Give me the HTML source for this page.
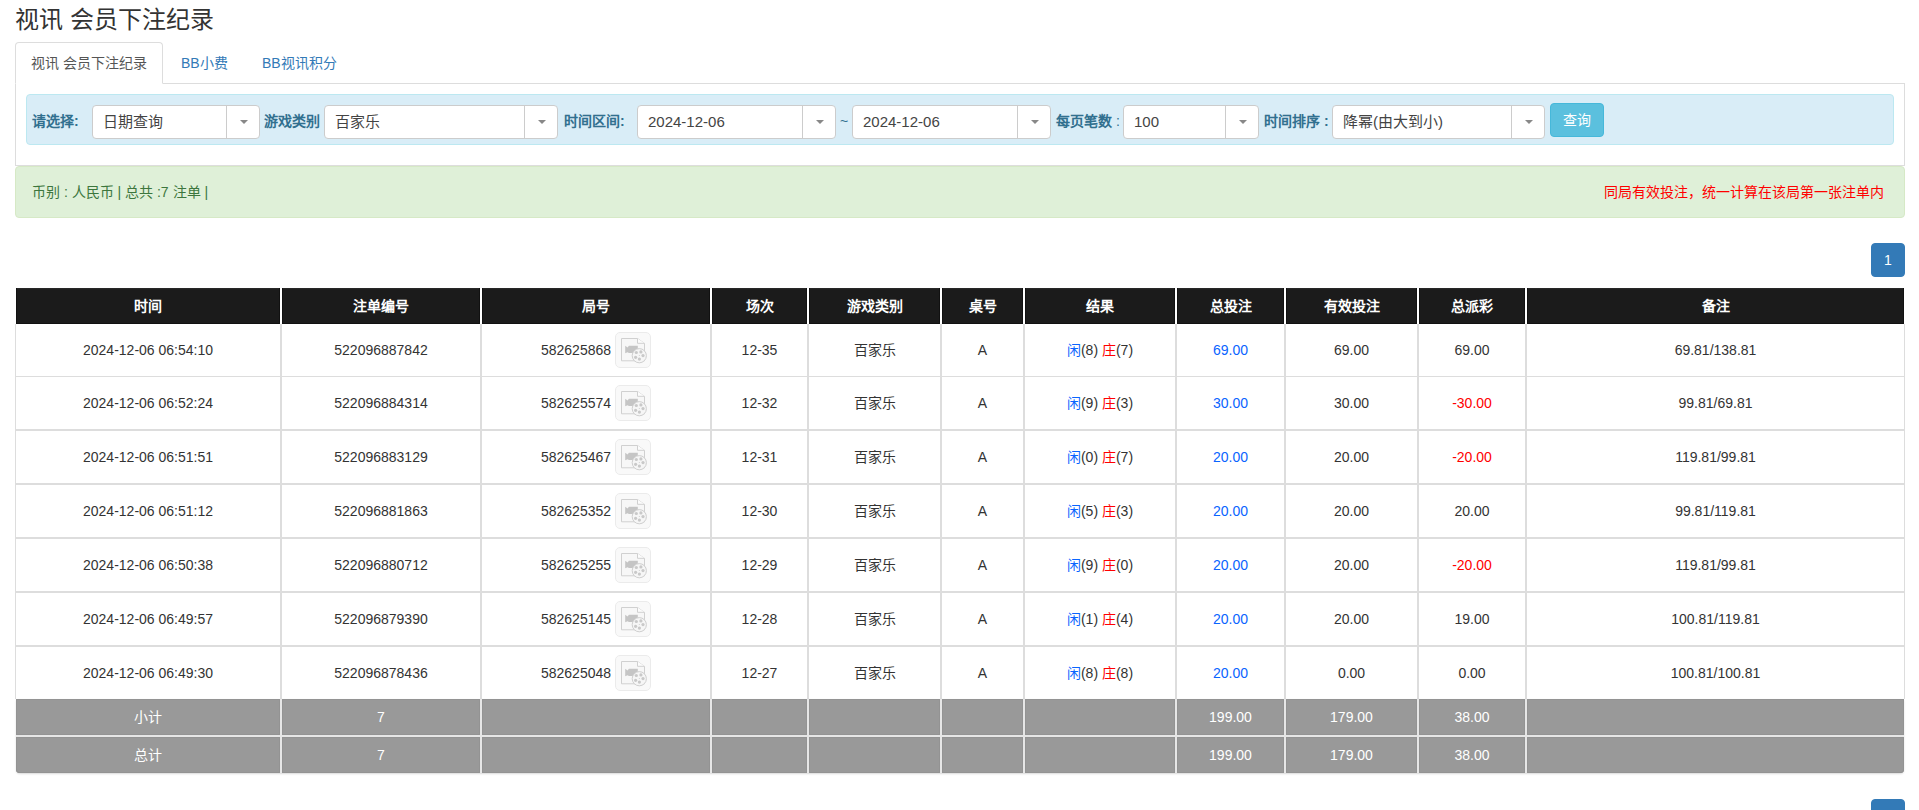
<!DOCTYPE html>
<html lang="zh-CN"><head><meta charset="utf-8">
<style>
*{box-sizing:border-box;}
html,body{margin:0;padding:0;background:#fff;}
body{width:1919px;height:810px;overflow:hidden;position:relative;font-family:"Liberation Sans",sans-serif;font-size:14px;line-height:20px;color:#333;}
.abs{position:absolute;}
.title{left:15px;top:5px;font-size:24px;line-height:30px;white-space:nowrap;}
.navline{left:15px;top:83px;width:1890px;height:1px;background:#ddd;}
.tab{top:42px;height:42px;line-height:20px;padding:10px 15px;white-space:nowrap;}
.tab.active{left:15px;width:148px;border:1px solid #ddd;border-bottom-color:#fff;border-radius:4px 4px 0 0;color:#555;background:#fff;}
.tab.link{color:#337ab7;border:1px solid transparent;}
.pane{left:15px;top:84px;width:1890px;height:82px;border:1px solid #ddd;border-top:none;}
.info{left:26px;top:94px;width:1868px;height:51px;background:#d9edf7;border:1px solid #bce8f1;border-radius:4px;}
.lbl{top:111px;font-weight:bold;color:#31708f;white-space:nowrap;line-height:20px;}
.sel{top:105px;height:34px;background:#fff;border:1px solid #ccc;border-radius:4px;}
.sel .t{position:absolute;left:10px;top:6px;font-size:15px;line-height:20px;color:#444;white-space:nowrap;}
.sel .ar{position:absolute;right:0;top:0;bottom:0;width:33px;border-left:1px solid #ccc;}
.sel .ar:after{content:"";position:absolute;left:13px;top:14px;border-left:4px solid transparent;border-right:4px solid transparent;border-top:4px solid #888;}
.btn{left:1550px;top:103px;width:54px;height:34px;background:#5bc0de;border:1px solid #46b8da;border-radius:4px;color:#fff;text-align:center;line-height:20px;padding-top:6px;}
.succ{left:15px;top:166px;width:1890px;height:52px;background:#dff0d8;border:1px solid #d6e9c6;border-radius:4px;}
.succ .l{position:absolute;left:16px;top:15px;color:#3c763d;white-space:nowrap;}
.succ .r{position:absolute;right:20px;top:15px;color:#f00;white-space:nowrap;}
.thead{left:16px;top:288px;width:1888px;height:36px;background:#fff;}
.th{top:288px;height:36px;background:linear-gradient(#2c2c2c,#1b1b1b 2px);box-shadow:inset 1px 0 #111,inset -1px 0 #111,inset 0 -1px #111;color:#fff;font-weight:bold;text-align:center;line-height:36px;white-space:nowrap;}
.tbody{left:15px;top:324px;width:1890px;height:375px;background:#ddd;}
.td{background:#fff;display:flex;align-items:center;justify-content:center;text-align:center;white-space:nowrap;}
.td .c{line-height:20px;}
.ic{margin-left:4px;display:block;}
.td .c.f{display:flex;align-items:center;}
.bl{color:#0a64ff;}
.rd{color:#f00;}
.tfoot{left:16px;top:699px;width:1888px;height:74px;background:#e6e6e6;border-radius:0 0 4px 4px;box-shadow:0 1px 2px rgba(0,0,0,.15);overflow:hidden;}
.tf{background:#999;box-shadow:inset 1px 0 #939393,inset -1px 0 #939393,inset 0 1px #939393,inset 0 -1px #939393;color:#fff;display:flex;align-items:center;justify-content:center;white-space:nowrap;}
.page{left:1871px;width:34px;height:34px;background:#337ab7;border:1px solid #337ab7;border-radius:4px;color:#fff;text-align:center;padding-top:6px;line-height:20px;}
</style></head><body>

<div class="abs title">视讯 会员下注纪录</div>
<div class="abs navline"></div>
<div class="abs tab active">视讯 会员下注纪录</div>
<div class="abs tab link" style="left:165px">BB小费</div>
<div class="abs tab link" style="left:246px">BB视讯积分</div>
<div class="abs pane"></div>
<div class="abs info"></div>
<div class="abs lbl" style="left:32px">请选择:</div>
<div class="abs sel" style="left:92px;width:168px"><span class="t">日期查询</span><span class="ar"></span></div>
<div class="abs lbl" style="left:264px">游戏类别</div>
<div class="abs sel" style="left:324px;width:234px"><span class="t">百家乐</span><span class="ar"></span></div>
<div class="abs lbl" style="left:564px">时间区间:</div>
<div class="abs sel" style="left:637px;width:199px"><span class="t">2024-12-06</span><span class="ar"></span></div>
<div class="abs" style="left:840px;top:111px;color:#31708f">~</div>
<div class="abs sel" style="left:852px;width:199px"><span class="t">2024-12-06</span><span class="ar"></span></div>
<div class="abs lbl" style="left:1056px">每页笔数 <span style="font-weight:normal">:</span></div>
<div class="abs sel" style="left:1123px;width:136px"><span class="t">100</span><span class="ar"></span></div>
<div class="abs lbl" style="left:1264px">时间排序 :</div>
<div class="abs sel" style="left:1332px;width:213px"><span class="t">降幂(由大到小)</span><span class="ar"></span></div>
<div class="abs btn">查询</div>
<div class="abs succ"><span class="l">币别 : 人民币 | 总共 :7 注单 |</span><span class="r">同局有效投注，统一计算在该局第一张注单内</span></div>
<div class="abs page" style="top:243px">1</div>
<!--TABLE-->
<div class="abs thead"></div>
<div class="abs th" style="left:16px;width:264px">时间</div>
<div class="abs th" style="left:282px;width:198px">注单编号</div>
<div class="abs th" style="left:482px;width:228px">局号</div>
<div class="abs th" style="left:712px;width:95px">场次</div>
<div class="abs th" style="left:809px;width:131px">游戏类别</div>
<div class="abs th" style="left:942px;width:81px">桌号</div>
<div class="abs th" style="left:1025px;width:150px">结果</div>
<div class="abs th" style="left:1177px;width:107px">总投注</div>
<div class="abs th" style="left:1286px;width:131px">有效投注</div>
<div class="abs th" style="left:1419px;width:106px">总派彩</div>
<div class="abs th" style="left:1527px;width:377px">备注</div>
<div class="abs tbody"></div>
<div class="abs td" style="left:16px;top:324px;width:264px;height:52px"><div class="c">2024-12-06 06:54:10</div></div>
<div class="abs td" style="left:282px;top:324px;width:198px;height:52px"><div class="c">522096887842</div></div>
<div class="abs td" style="left:482px;top:324px;width:228px;height:52px"><div class="c f">582625868<svg class="ic" width="36" height="36" viewBox="0 0 36 36"><rect x="0.5" y="0.5" width="35" height="35" rx="4.5" fill="#f9f9f9" stroke="#ebebeb"/><path d="M6.5 6.5H22.5L29.5 11.5V28.8H6.5Z" fill="#f7f7f7" stroke="#d0d0d0"/><path d="M22.5 6.5V11.3H29.5" fill="#fcfcfc" stroke="#d0d0d0"/><path d="M10.2 13.8L12.6 15.6L13.9 13.8H22.8V20.9H13.9L12.6 20.2L10.2 21.3Z" fill="#c5c5c5"/><circle cx="24.3" cy="23.7" r="7.1" fill="#f6f6f6" stroke="#cfcfcf"/><g fill="#c9c9c9"><circle cx="21.3" cy="20.5" r="1.6"/><circle cx="25.9" cy="19.9" r="1.6"/><circle cx="28" cy="23.6" r="1.6"/><circle cx="24.4" cy="27.1" r="1.6"/><circle cx="20.6" cy="25.3" r="1.6"/><circle cx="24.3" cy="23.6" r="0.5"/></g></svg></div></div>
<div class="abs td" style="left:712px;top:324px;width:95px;height:52px"><div class="c">12-35</div></div>
<div class="abs td" style="left:809px;top:324px;width:131px;height:52px"><div class="c">百家乐</div></div>
<div class="abs td" style="left:942px;top:324px;width:81px;height:52px"><div class="c">A</div></div>
<div class="abs td" style="left:1025px;top:324px;width:150px;height:52px"><div class="c"><span class="bl">闲</span>(8) <span class="rd">庄</span>(7)</div></div>
<div class="abs td" style="left:1177px;top:324px;width:107px;height:52px"><div class="c"><span class="bl">69.00</span></div></div>
<div class="abs td" style="left:1286px;top:324px;width:131px;height:52px"><div class="c">69.00</div></div>
<div class="abs td" style="left:1419px;top:324px;width:106px;height:52px"><div class="c">69.00</div></div>
<div class="abs td" style="left:1527px;top:324px;width:377px;height:52px"><div class="c">69.81/138.81</div></div>
<div class="abs td" style="left:16px;top:377px;width:264px;height:52px"><div class="c">2024-12-06 06:52:24</div></div>
<div class="abs td" style="left:282px;top:377px;width:198px;height:52px"><div class="c">522096884314</div></div>
<div class="abs td" style="left:482px;top:377px;width:228px;height:52px"><div class="c f">582625574<svg class="ic" width="36" height="36" viewBox="0 0 36 36"><rect x="0.5" y="0.5" width="35" height="35" rx="4.5" fill="#f9f9f9" stroke="#ebebeb"/><path d="M6.5 6.5H22.5L29.5 11.5V28.8H6.5Z" fill="#f7f7f7" stroke="#d0d0d0"/><path d="M22.5 6.5V11.3H29.5" fill="#fcfcfc" stroke="#d0d0d0"/><path d="M10.2 13.8L12.6 15.6L13.9 13.8H22.8V20.9H13.9L12.6 20.2L10.2 21.3Z" fill="#c5c5c5"/><circle cx="24.3" cy="23.7" r="7.1" fill="#f6f6f6" stroke="#cfcfcf"/><g fill="#c9c9c9"><circle cx="21.3" cy="20.5" r="1.6"/><circle cx="25.9" cy="19.9" r="1.6"/><circle cx="28" cy="23.6" r="1.6"/><circle cx="24.4" cy="27.1" r="1.6"/><circle cx="20.6" cy="25.3" r="1.6"/><circle cx="24.3" cy="23.6" r="0.5"/></g></svg></div></div>
<div class="abs td" style="left:712px;top:377px;width:95px;height:52px"><div class="c">12-32</div></div>
<div class="abs td" style="left:809px;top:377px;width:131px;height:52px"><div class="c">百家乐</div></div>
<div class="abs td" style="left:942px;top:377px;width:81px;height:52px"><div class="c">A</div></div>
<div class="abs td" style="left:1025px;top:377px;width:150px;height:52px"><div class="c"><span class="bl">闲</span>(9) <span class="rd">庄</span>(3)</div></div>
<div class="abs td" style="left:1177px;top:377px;width:107px;height:52px"><div class="c"><span class="bl">30.00</span></div></div>
<div class="abs td" style="left:1286px;top:377px;width:131px;height:52px"><div class="c">30.00</div></div>
<div class="abs td" style="left:1419px;top:377px;width:106px;height:52px"><div class="c"><span class="rd">-30.00</span></div></div>
<div class="abs td" style="left:1527px;top:377px;width:377px;height:52px"><div class="c">99.81/69.81</div></div>
<div class="abs td" style="left:16px;top:431px;width:264px;height:52px"><div class="c">2024-12-06 06:51:51</div></div>
<div class="abs td" style="left:282px;top:431px;width:198px;height:52px"><div class="c">522096883129</div></div>
<div class="abs td" style="left:482px;top:431px;width:228px;height:52px"><div class="c f">582625467<svg class="ic" width="36" height="36" viewBox="0 0 36 36"><rect x="0.5" y="0.5" width="35" height="35" rx="4.5" fill="#f9f9f9" stroke="#ebebeb"/><path d="M6.5 6.5H22.5L29.5 11.5V28.8H6.5Z" fill="#f7f7f7" stroke="#d0d0d0"/><path d="M22.5 6.5V11.3H29.5" fill="#fcfcfc" stroke="#d0d0d0"/><path d="M10.2 13.8L12.6 15.6L13.9 13.8H22.8V20.9H13.9L12.6 20.2L10.2 21.3Z" fill="#c5c5c5"/><circle cx="24.3" cy="23.7" r="7.1" fill="#f6f6f6" stroke="#cfcfcf"/><g fill="#c9c9c9"><circle cx="21.3" cy="20.5" r="1.6"/><circle cx="25.9" cy="19.9" r="1.6"/><circle cx="28" cy="23.6" r="1.6"/><circle cx="24.4" cy="27.1" r="1.6"/><circle cx="20.6" cy="25.3" r="1.6"/><circle cx="24.3" cy="23.6" r="0.5"/></g></svg></div></div>
<div class="abs td" style="left:712px;top:431px;width:95px;height:52px"><div class="c">12-31</div></div>
<div class="abs td" style="left:809px;top:431px;width:131px;height:52px"><div class="c">百家乐</div></div>
<div class="abs td" style="left:942px;top:431px;width:81px;height:52px"><div class="c">A</div></div>
<div class="abs td" style="left:1025px;top:431px;width:150px;height:52px"><div class="c"><span class="bl">闲</span>(0) <span class="rd">庄</span>(7)</div></div>
<div class="abs td" style="left:1177px;top:431px;width:107px;height:52px"><div class="c"><span class="bl">20.00</span></div></div>
<div class="abs td" style="left:1286px;top:431px;width:131px;height:52px"><div class="c">20.00</div></div>
<div class="abs td" style="left:1419px;top:431px;width:106px;height:52px"><div class="c"><span class="rd">-20.00</span></div></div>
<div class="abs td" style="left:1527px;top:431px;width:377px;height:52px"><div class="c">119.81/99.81</div></div>
<div class="abs td" style="left:16px;top:485px;width:264px;height:52px"><div class="c">2024-12-06 06:51:12</div></div>
<div class="abs td" style="left:282px;top:485px;width:198px;height:52px"><div class="c">522096881863</div></div>
<div class="abs td" style="left:482px;top:485px;width:228px;height:52px"><div class="c f">582625352<svg class="ic" width="36" height="36" viewBox="0 0 36 36"><rect x="0.5" y="0.5" width="35" height="35" rx="4.5" fill="#f9f9f9" stroke="#ebebeb"/><path d="M6.5 6.5H22.5L29.5 11.5V28.8H6.5Z" fill="#f7f7f7" stroke="#d0d0d0"/><path d="M22.5 6.5V11.3H29.5" fill="#fcfcfc" stroke="#d0d0d0"/><path d="M10.2 13.8L12.6 15.6L13.9 13.8H22.8V20.9H13.9L12.6 20.2L10.2 21.3Z" fill="#c5c5c5"/><circle cx="24.3" cy="23.7" r="7.1" fill="#f6f6f6" stroke="#cfcfcf"/><g fill="#c9c9c9"><circle cx="21.3" cy="20.5" r="1.6"/><circle cx="25.9" cy="19.9" r="1.6"/><circle cx="28" cy="23.6" r="1.6"/><circle cx="24.4" cy="27.1" r="1.6"/><circle cx="20.6" cy="25.3" r="1.6"/><circle cx="24.3" cy="23.6" r="0.5"/></g></svg></div></div>
<div class="abs td" style="left:712px;top:485px;width:95px;height:52px"><div class="c">12-30</div></div>
<div class="abs td" style="left:809px;top:485px;width:131px;height:52px"><div class="c">百家乐</div></div>
<div class="abs td" style="left:942px;top:485px;width:81px;height:52px"><div class="c">A</div></div>
<div class="abs td" style="left:1025px;top:485px;width:150px;height:52px"><div class="c"><span class="bl">闲</span>(5) <span class="rd">庄</span>(3)</div></div>
<div class="abs td" style="left:1177px;top:485px;width:107px;height:52px"><div class="c"><span class="bl">20.00</span></div></div>
<div class="abs td" style="left:1286px;top:485px;width:131px;height:52px"><div class="c">20.00</div></div>
<div class="abs td" style="left:1419px;top:485px;width:106px;height:52px"><div class="c">20.00</div></div>
<div class="abs td" style="left:1527px;top:485px;width:377px;height:52px"><div class="c">99.81/119.81</div></div>
<div class="abs td" style="left:16px;top:539px;width:264px;height:52px"><div class="c">2024-12-06 06:50:38</div></div>
<div class="abs td" style="left:282px;top:539px;width:198px;height:52px"><div class="c">522096880712</div></div>
<div class="abs td" style="left:482px;top:539px;width:228px;height:52px"><div class="c f">582625255<svg class="ic" width="36" height="36" viewBox="0 0 36 36"><rect x="0.5" y="0.5" width="35" height="35" rx="4.5" fill="#f9f9f9" stroke="#ebebeb"/><path d="M6.5 6.5H22.5L29.5 11.5V28.8H6.5Z" fill="#f7f7f7" stroke="#d0d0d0"/><path d="M22.5 6.5V11.3H29.5" fill="#fcfcfc" stroke="#d0d0d0"/><path d="M10.2 13.8L12.6 15.6L13.9 13.8H22.8V20.9H13.9L12.6 20.2L10.2 21.3Z" fill="#c5c5c5"/><circle cx="24.3" cy="23.7" r="7.1" fill="#f6f6f6" stroke="#cfcfcf"/><g fill="#c9c9c9"><circle cx="21.3" cy="20.5" r="1.6"/><circle cx="25.9" cy="19.9" r="1.6"/><circle cx="28" cy="23.6" r="1.6"/><circle cx="24.4" cy="27.1" r="1.6"/><circle cx="20.6" cy="25.3" r="1.6"/><circle cx="24.3" cy="23.6" r="0.5"/></g></svg></div></div>
<div class="abs td" style="left:712px;top:539px;width:95px;height:52px"><div class="c">12-29</div></div>
<div class="abs td" style="left:809px;top:539px;width:131px;height:52px"><div class="c">百家乐</div></div>
<div class="abs td" style="left:942px;top:539px;width:81px;height:52px"><div class="c">A</div></div>
<div class="abs td" style="left:1025px;top:539px;width:150px;height:52px"><div class="c"><span class="bl">闲</span>(9) <span class="rd">庄</span>(0)</div></div>
<div class="abs td" style="left:1177px;top:539px;width:107px;height:52px"><div class="c"><span class="bl">20.00</span></div></div>
<div class="abs td" style="left:1286px;top:539px;width:131px;height:52px"><div class="c">20.00</div></div>
<div class="abs td" style="left:1419px;top:539px;width:106px;height:52px"><div class="c"><span class="rd">-20.00</span></div></div>
<div class="abs td" style="left:1527px;top:539px;width:377px;height:52px"><div class="c">119.81/99.81</div></div>
<div class="abs td" style="left:16px;top:593px;width:264px;height:52px"><div class="c">2024-12-06 06:49:57</div></div>
<div class="abs td" style="left:282px;top:593px;width:198px;height:52px"><div class="c">522096879390</div></div>
<div class="abs td" style="left:482px;top:593px;width:228px;height:52px"><div class="c f">582625145<svg class="ic" width="36" height="36" viewBox="0 0 36 36"><rect x="0.5" y="0.5" width="35" height="35" rx="4.5" fill="#f9f9f9" stroke="#ebebeb"/><path d="M6.5 6.5H22.5L29.5 11.5V28.8H6.5Z" fill="#f7f7f7" stroke="#d0d0d0"/><path d="M22.5 6.5V11.3H29.5" fill="#fcfcfc" stroke="#d0d0d0"/><path d="M10.2 13.8L12.6 15.6L13.9 13.8H22.8V20.9H13.9L12.6 20.2L10.2 21.3Z" fill="#c5c5c5"/><circle cx="24.3" cy="23.7" r="7.1" fill="#f6f6f6" stroke="#cfcfcf"/><g fill="#c9c9c9"><circle cx="21.3" cy="20.5" r="1.6"/><circle cx="25.9" cy="19.9" r="1.6"/><circle cx="28" cy="23.6" r="1.6"/><circle cx="24.4" cy="27.1" r="1.6"/><circle cx="20.6" cy="25.3" r="1.6"/><circle cx="24.3" cy="23.6" r="0.5"/></g></svg></div></div>
<div class="abs td" style="left:712px;top:593px;width:95px;height:52px"><div class="c">12-28</div></div>
<div class="abs td" style="left:809px;top:593px;width:131px;height:52px"><div class="c">百家乐</div></div>
<div class="abs td" style="left:942px;top:593px;width:81px;height:52px"><div class="c">A</div></div>
<div class="abs td" style="left:1025px;top:593px;width:150px;height:52px"><div class="c"><span class="bl">闲</span>(1) <span class="rd">庄</span>(4)</div></div>
<div class="abs td" style="left:1177px;top:593px;width:107px;height:52px"><div class="c"><span class="bl">20.00</span></div></div>
<div class="abs td" style="left:1286px;top:593px;width:131px;height:52px"><div class="c">20.00</div></div>
<div class="abs td" style="left:1419px;top:593px;width:106px;height:52px"><div class="c">19.00</div></div>
<div class="abs td" style="left:1527px;top:593px;width:377px;height:52px"><div class="c">100.81/119.81</div></div>
<div class="abs td" style="left:16px;top:647px;width:264px;height:52px"><div class="c">2024-12-06 06:49:30</div></div>
<div class="abs td" style="left:282px;top:647px;width:198px;height:52px"><div class="c">522096878436</div></div>
<div class="abs td" style="left:482px;top:647px;width:228px;height:52px"><div class="c f">582625048<svg class="ic" width="36" height="36" viewBox="0 0 36 36"><rect x="0.5" y="0.5" width="35" height="35" rx="4.5" fill="#f9f9f9" stroke="#ebebeb"/><path d="M6.5 6.5H22.5L29.5 11.5V28.8H6.5Z" fill="#f7f7f7" stroke="#d0d0d0"/><path d="M22.5 6.5V11.3H29.5" fill="#fcfcfc" stroke="#d0d0d0"/><path d="M10.2 13.8L12.6 15.6L13.9 13.8H22.8V20.9H13.9L12.6 20.2L10.2 21.3Z" fill="#c5c5c5"/><circle cx="24.3" cy="23.7" r="7.1" fill="#f6f6f6" stroke="#cfcfcf"/><g fill="#c9c9c9"><circle cx="21.3" cy="20.5" r="1.6"/><circle cx="25.9" cy="19.9" r="1.6"/><circle cx="28" cy="23.6" r="1.6"/><circle cx="24.4" cy="27.1" r="1.6"/><circle cx="20.6" cy="25.3" r="1.6"/><circle cx="24.3" cy="23.6" r="0.5"/></g></svg></div></div>
<div class="abs td" style="left:712px;top:647px;width:95px;height:52px"><div class="c">12-27</div></div>
<div class="abs td" style="left:809px;top:647px;width:131px;height:52px"><div class="c">百家乐</div></div>
<div class="abs td" style="left:942px;top:647px;width:81px;height:52px"><div class="c">A</div></div>
<div class="abs td" style="left:1025px;top:647px;width:150px;height:52px"><div class="c"><span class="bl">闲</span>(8) <span class="rd">庄</span>(8)</div></div>
<div class="abs td" style="left:1177px;top:647px;width:107px;height:52px"><div class="c"><span class="bl">20.00</span></div></div>
<div class="abs td" style="left:1286px;top:647px;width:131px;height:52px"><div class="c">0.00</div></div>
<div class="abs td" style="left:1419px;top:647px;width:106px;height:52px"><div class="c">0.00</div></div>
<div class="abs td" style="left:1527px;top:647px;width:377px;height:52px"><div class="c">100.81/100.81</div></div>
<div class="abs tfoot"></div>
<div class="abs tf" style="left:16px;top:699px;width:264px;height:36px"><div class="c">小计</div></div>
<div class="abs tf" style="left:282px;top:699px;width:198px;height:36px"><div class="c">7</div></div>
<div class="abs tf" style="left:482px;top:699px;width:228px;height:36px"><div class="c"></div></div>
<div class="abs tf" style="left:712px;top:699px;width:95px;height:36px"><div class="c"></div></div>
<div class="abs tf" style="left:809px;top:699px;width:131px;height:36px"><div class="c"></div></div>
<div class="abs tf" style="left:942px;top:699px;width:81px;height:36px"><div class="c"></div></div>
<div class="abs tf" style="left:1025px;top:699px;width:150px;height:36px"><div class="c"></div></div>
<div class="abs tf" style="left:1177px;top:699px;width:107px;height:36px"><div class="c">199.00</div></div>
<div class="abs tf" style="left:1286px;top:699px;width:131px;height:36px"><div class="c">179.00</div></div>
<div class="abs tf" style="left:1419px;top:699px;width:106px;height:36px"><div class="c">38.00</div></div>
<div class="abs tf" style="left:1527px;top:699px;width:377px;height:36px"><div class="c"></div></div>
<div class="abs tf" style="left:16px;top:737px;width:264px;height:36px;border-bottom-left-radius:4px"><div class="c">总计</div></div>
<div class="abs tf" style="left:282px;top:737px;width:198px;height:36px"><div class="c">7</div></div>
<div class="abs tf" style="left:482px;top:737px;width:228px;height:36px"><div class="c"></div></div>
<div class="abs tf" style="left:712px;top:737px;width:95px;height:36px"><div class="c"></div></div>
<div class="abs tf" style="left:809px;top:737px;width:131px;height:36px"><div class="c"></div></div>
<div class="abs tf" style="left:942px;top:737px;width:81px;height:36px"><div class="c"></div></div>
<div class="abs tf" style="left:1025px;top:737px;width:150px;height:36px"><div class="c"></div></div>
<div class="abs tf" style="left:1177px;top:737px;width:107px;height:36px"><div class="c">199.00</div></div>
<div class="abs tf" style="left:1286px;top:737px;width:131px;height:36px"><div class="c">179.00</div></div>
<div class="abs tf" style="left:1419px;top:737px;width:106px;height:36px"><div class="c">38.00</div></div>
<div class="abs tf" style="left:1527px;top:737px;width:377px;height:36px;border-bottom-right-radius:4px"><div class="c"></div></div>
<!--/TABLE-->
<div class="abs page" style="top:799px">1</div>
</body></html>
